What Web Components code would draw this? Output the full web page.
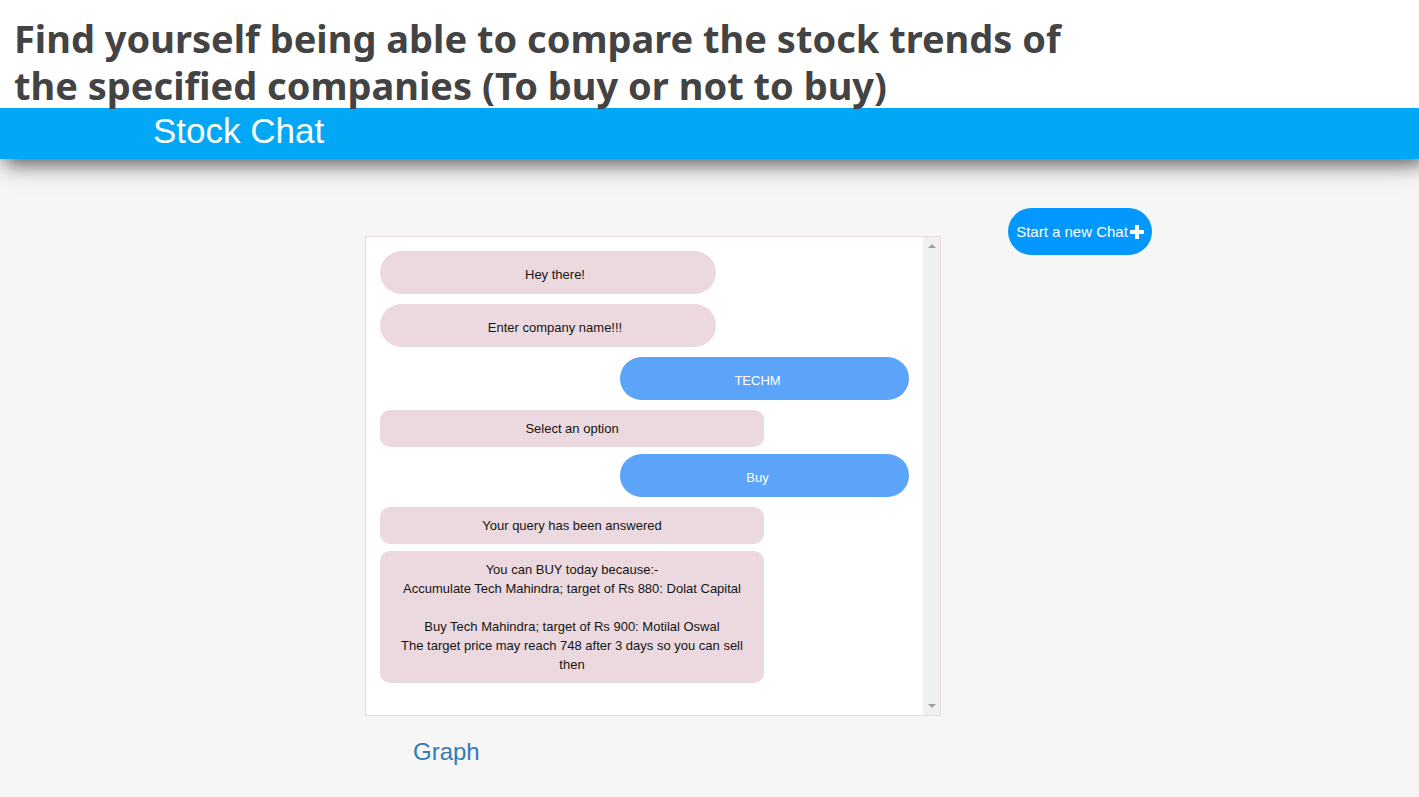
<!DOCTYPE html>
<html lang="en">
<head>
<meta charset="utf-8">
<title>Stock Chat</title>
<style>
  html { background: #f6f6f6; }
  body { margin: 0; overflow-x: hidden; font-family: "Liberation Sans", Arial, sans-serif; }
</style>
</head>
<body>
<stock-page>
  <span slot="title">Find yourself being able to compare the stock trends of<br>the specified companies (To buy or not to buy)</span>
  <app-bar>Stock Chat</app-bar>
  <chat-panel slot="panel">
    <chat-message kind="bot">Hey there!</chat-message>
    <chat-message kind="bot">Enter company name!!!</chat-message>
    <chat-message kind="user">TECHM</chat-message>
    <chat-message kind="answer">Select an option</chat-message>
    <chat-message kind="user">Buy</chat-message>
    <chat-message kind="answer">Your query has been answered</chat-message>
    <chat-message kind="answer">You can BUY today because:-<br>Accumulate Tech Mahindra; target of Rs 880: Dolat Capital<br><br>Buy Tech Mahindra; target of Rs 900: Motilal Oswal<br>The target price may reach 748 after 3 days so you can sell<br>then</chat-message>
  </chat-panel>
  <graph-link slot="panel">Graph</graph-link>
  <new-chat-button slot="side">Start a new Chat</new-chat-button>
</stock-page>

<script>
function define(name, html) {
  const template = document.createElement('template');
  template.innerHTML = html;
  customElements.define(name, class extends HTMLElement {
    constructor() {
      super();
      this.attachShadow({ mode: 'open' }).append(template.content.cloneNode(true));
    }
  });
}

define('stock-page', `
  <style>
    :host { display: block; background: #f6f6f6; }
    /* The heading's descenders stay above the bar that follows it. */
    h1 { position: relative; z-index: 1; margin: 0; padding: 15px 14px 0; height: 93px; color: #434343;
         background: #fff; font: bold 38px/47px "Noto Sans", "Open Sans", sans-serif; white-space: nowrap; }
    main { display: grid; grid-template-columns: 365fr 576fr 478fr; }
    .panel { grid-column: 2; padding-top: 77px; }
    .side { padding: 49px 0 0 67px; }
  </style>
  <h1><slot name="title"></slot></h1>
  <slot></slot>
  <main>
    <div class="panel"><slot name="panel"></slot></div>
    <aside class="side"><slot name="side"></slot></aside>
  </main>`);

define('app-bar', `
  <style>
    :host { display: block; }
    header { padding: 3px 0 8px 153px; background: #02a8f5; color: #fff;
             box-shadow: 6px 5px 18px rgba(0, 0, 0, .55), 0 8px 30px rgba(0, 0, 0, .15);
             clip-path: inset(0 0 -50px 0); }
    h2 { margin: 0; font-size: 35px; font-weight: normal; line-height: 40px; }
  </style>
  <header><h2><slot></slot></h2></header>`);

define('chat-panel', `
  <style>
    :host { display: flex; box-sizing: border-box; min-height: 480px; border: 1px solid #e5dadd; background: #fff; }
    .log { flex: 1; min-width: 0; padding: 14px; }
    .track { width: 17px; padding: 7px 0; box-sizing: border-box; background: #f0f0f0;
             display: flex; flex-direction: column; justify-content: space-between; align-items: center; }
    svg { display: block; fill: #a0a0a0; }
  </style>
  <div class="log" role="log"><slot></slot></div>
  <div class="track" aria-hidden="true">
    <svg width="8" height="4" viewBox="0 0 8 4"><path d="M0 4 4 0l4 4z"/></svg>
    <svg width="8" height="4" viewBox="0 0 8 4"><path d="M0 0h8L4 4z"/></svg>
  </div>`);

define('chat-message', `
  <style>
    :host { display: block; box-sizing: border-box; max-width: 100%; width: 336px; margin-bottom: 10px;
            padding: 14px 12px 10px 26px; border-radius: 22px; background: #ebd9df; color: #151515;
            font-size: 13px; line-height: 19px; text-align: center; }
    :host([kind="user"]) { width: 289px; margin-left: auto; padding: 14px 26px 10px 12px; background: #5ba4f9; color: #fff; }
    :host([kind="answer"]) { width: 384px; margin-bottom: 7px; padding: 9px 12px; border-radius: 10px; }
  </style>
  <slot></slot>`);

define('graph-link', `
  <style>
    :host { display: block; padding: 20px 48px; font-size: 24px; line-height: 32px; }
    a { color: #337ab7; text-decoration: none; }
  </style>
  <a href="#graph"><slot></slot></a>`);

define('new-chat-button', `
  <style>
    :host { display: block; }
    button { display: flex; align-items: center; justify-content: center; gap: 2px; width: 144px; height: 47px;
             padding: 0; border: 0; border-radius: 24px; background: #0298ff; color: #fff;
             font: 15px/20px "Liberation Sans", Arial, sans-serif; white-space: nowrap; cursor: pointer; }
  </style>
  <button type="button"><slot></slot><svg width="14" height="14" viewBox="0 0 14 14" fill="#fff" aria-hidden="true"><path d="M5 0h4v5h5v4H9v5H5V9H0V5h5z"/></svg></button>`);
</script>
</body>
</html>
